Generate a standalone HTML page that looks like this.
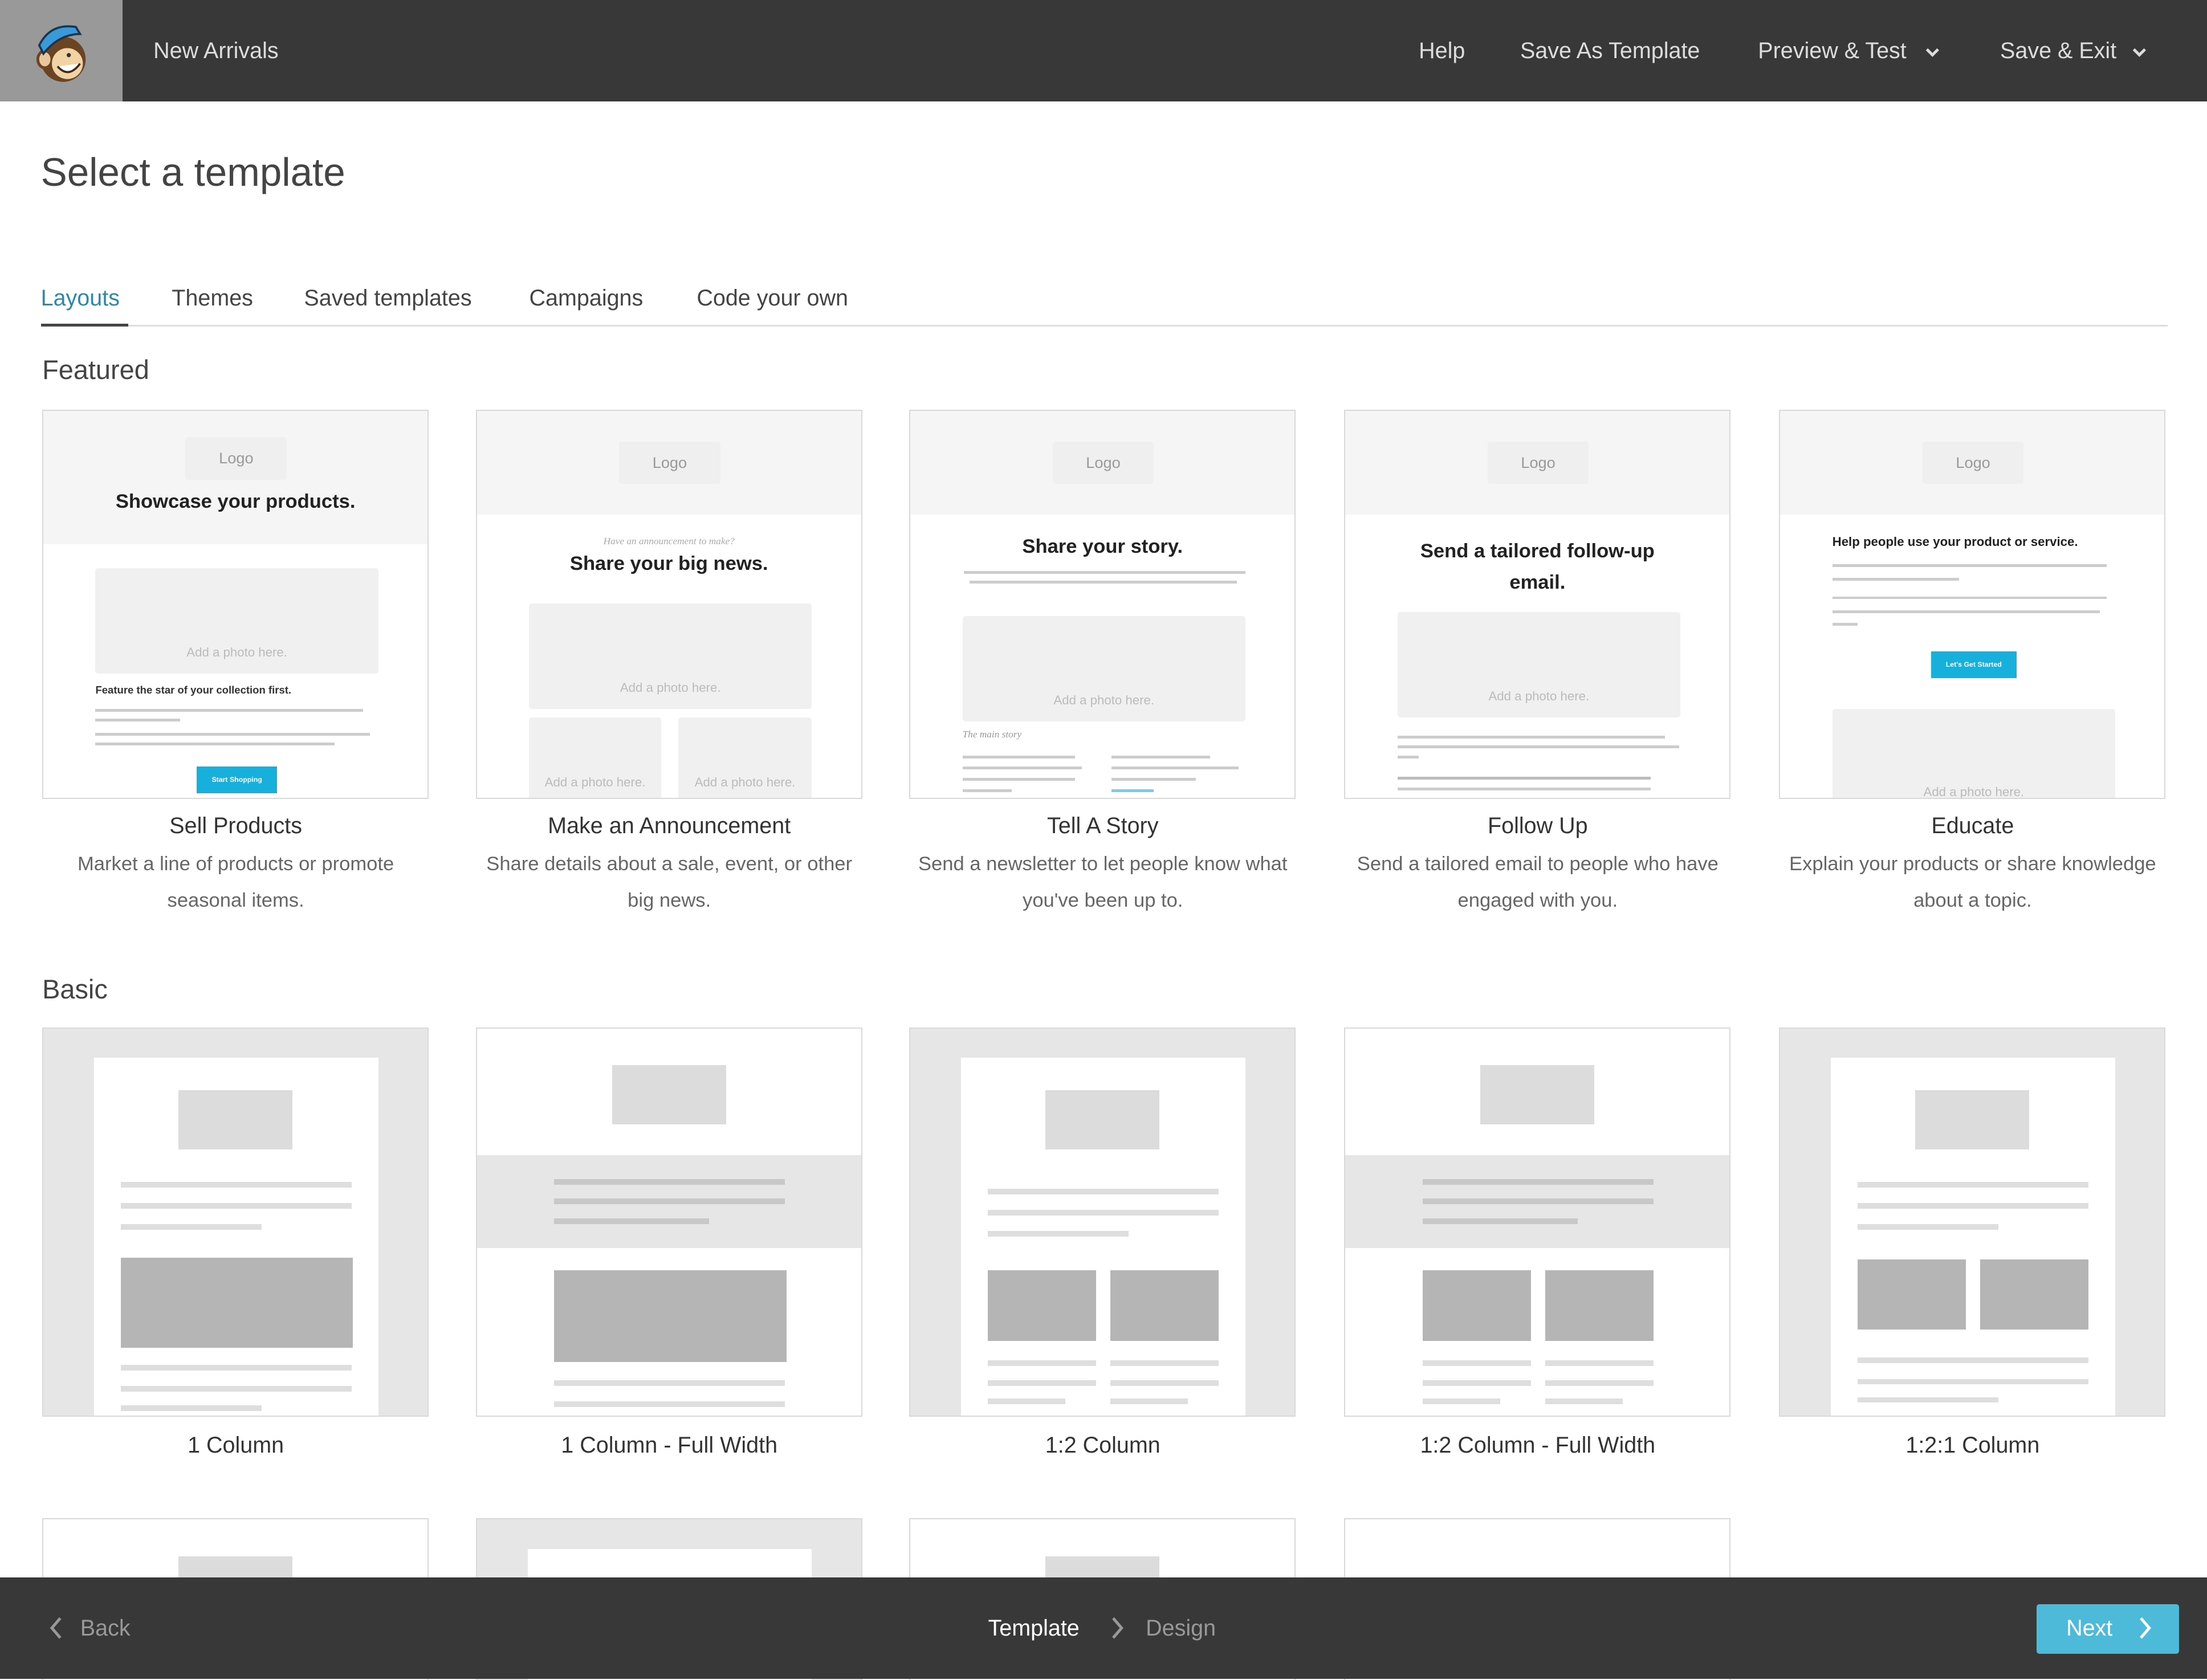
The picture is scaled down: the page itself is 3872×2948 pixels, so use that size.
<!DOCTYPE html>
<html style="width:3872px;height:2948px;overflow:hidden"><head><meta charset="utf-8">
<style>
html,body{margin:0;padding:0;background:#fff;overflow:hidden}
body{width:1568px;height:1193px;zoom:2.46939;position:relative;font-family:"Liberation Sans",sans-serif;color:#444}
.a{position:absolute}
.hdr{left:0;top:0;width:1568px;height:72px;background:#383838}
.nav{color:#ddd;font-size:16px;top:27px}
.card{position:absolute;width:273px;height:275px;border:1px solid #d9d9d9;background:#fff;overflow:hidden}
.band{position:absolute;left:0;top:0;width:100%;background:#f5f5f5}
.logo{position:absolute;width:72px;height:30px;background:#efefef;color:#999;font-size:11px;text-align:center;line-height:30px;border-radius:2px}
.ph{position:absolute;background:#f0f0f0;color:#bbb;font-size:9px;text-align:center;border-radius:2px}
.h{position:absolute;left:0;width:100%;text-align:center;font-weight:bold;color:#222}
.tl{position:absolute;height:2px;background:#ccc}
.btn{position:absolute;background:#17b0dd;color:#fff;font-size:5px;font-weight:bold;text-align:center}
.ct{position:absolute;width:275px;text-align:center;font-size:16px;color:#333}
.cd{position:absolute;width:275px;text-align:center;font-size:14px;color:#666;line-height:26px}
.g{position:absolute;background:#e6e6e6}
.w{position:absolute;background:#fff}
.lg{position:absolute;background:#dcdcdc}
.ln{position:absolute;height:4px;background:#dedede}
.ln2{position:absolute;height:4px;background:#c8c8c8}
.bk{position:absolute;background:#b5b5b5}
.tab{position:absolute;top:203px;font-size:16px;color:#444}
.sec{position:absolute;left:30px;font-size:19px;color:#444}
</style></head><body>

<div class="a hdr"></div>
<div class="a" style="left:0;top:0;width:87px;height:72px;background:#999"></div>
<svg class="a" style="left:22px;top:14px" width="44" height="46" viewBox="0 0 44 46">
<ellipse cx="23" cy="28" rx="16" ry="16" fill="#6b4423"/>
<ellipse cx="10" cy="28" rx="5" ry="6" fill="#e9c79a" stroke="#6b4423" stroke-width="2"/>
<ellipse cx="26" cy="31" rx="11" ry="11" fill="#f2d3a6"/>
<path d="M19 33 Q27 42 35 31" fill="#fff" stroke="#3a2a1a" stroke-width="1.5"/>
<path d="M6 18 Q14 2 32 5 L35 10 Q20 10 9 24 Z" fill="#3a9ad9" stroke="#1a3550" stroke-width="1.5"/>
<circle cx="27" cy="25" r="1.5" fill="#333"/>
</svg>
<div class="a nav" style="left:109px;top:27px">New Arrivals</div>
<div class="a nav" style="left:1008px">Help</div>
<div class="a nav" style="left:1080px">Save As Template</div>
<div class="a nav" style="left:1249px">Preview &amp; Test</div>
<svg class="a" style="left:1368px;top:34px" width="10" height="7"><path d="M1 1 L5 5 L9 1" stroke="#ddd" stroke-width="2" fill="none"/></svg>
<div class="a nav" style="left:1421px">Save &amp; Exit</div>
<svg class="a" style="left:1515px;top:34px" width="10" height="7"><path d="M1 1 L5 5 L9 1" stroke="#ddd" stroke-width="2" fill="none"/></svg>

<div class="a" style="left:29px;top:106px;font-size:28px;color:#444">Select a template</div>

<div class="tab" style="left:29px;color:#2a8aa8">Layouts</div>
<div class="tab" style="left:122px">Themes</div>
<div class="tab" style="left:216px">Saved templates</div>
<div class="tab" style="left:376px">Campaigns</div>
<div class="tab" style="left:495px">Code your own</div>
<div class="a" style="left:29px;top:231px;width:1511px;height:1px;background:#ddd"></div>
<div class="a" style="left:29px;top:230px;width:62px;height:2px;background:#444"></div>

<div class="sec" style="top:252px">Featured</div>

<div class="card" style="left:30px;top:291px">
 <div class="band" style="height:95px"></div>
 <div class="logo" style="left:101px;top:19px">Logo</div>
 <div class="h" style="top:57px;font-size:14px">Showcase your products.</div>
 <div class="ph" style="left:37px;top:112px;width:201px;height:75px;line-height:120px">Add a photo here.</div>
 <div class="a" style="left:37px;top:194px;font-size:7.5px;font-weight:bold;color:#333">Feature the star of your collection first.</div>
 <div class="tl" style="left:37px;top:212px;width:190px"></div>
 <div class="tl" style="left:37px;top:219px;width:60px"></div>
 <div class="tl" style="left:37px;top:229px;width:195px"></div>
 <div class="tl" style="left:37px;top:236px;width:170px"></div>
 <div class="btn" style="left:109px;top:253px;width:57px;height:19px;line-height:19px">Start Shopping</div>
</div>
<div class="ct" style="left:30px;top:578px">Sell Products</div>
<div class="cd" style="left:30px;top:601px">Market a line of products or promote seasonal items.</div>

<div class="card" style="left:338px;top:291px">
 <div class="band" style="height:74px"></div>
 <div class="logo" style="left:101px;top:22px">Logo</div>
 <div class="a" style="left:0;width:100%;top:89px;text-align:center;font-size:7px;font-style:italic;color:#aaa;font-family:'Liberation Serif',serif">Have an announcement to make?</div>
 <div class="h" style="top:101px;font-size:14px">Share your big news.</div>
 <div class="ph" style="left:37px;top:137px;width:201px;height:75px;line-height:120px">Add a photo here.</div>
 <div class="ph" style="left:37px;top:218px;width:94px;height:70px;line-height:92px">Add a photo here.</div>
 <div class="ph" style="left:143px;top:218px;width:95px;height:70px;line-height:92px">Add a photo here.</div>
</div>
<div class="ct" style="left:338px;top:578px">Make an Announcement</div>
<div class="cd" style="left:338px;top:601px">Share details about a sale, event, or other big news.</div>

<div class="card" style="left:646px;top:291px">
 <div class="band" style="height:74px"></div>
 <div class="logo" style="left:101px;top:22px">Logo</div>
 <div class="h" style="top:89px;font-size:14px">Share your story.</div>
 <div class="tl" style="left:38px;top:114px;width:200px"></div>
 <div class="tl" style="left:42px;top:121px;width:190px"></div>
 <div class="ph" style="left:37px;top:146px;width:201px;height:75px;line-height:120px">Add a photo here.</div>
 <div class="a" style="left:37px;top:226px;font-size:7px;font-style:italic;color:#999;font-family:'Liberation Serif',serif">The main story</div>
 <div class="tl" style="left:37px;top:245px;width:80px"></div>
 <div class="tl" style="left:37px;top:253px;width:85px"></div>
 <div class="tl" style="left:37px;top:261px;width:80px"></div>
 <div class="tl" style="left:37px;top:269px;width:35px"></div>
 <div class="tl" style="left:143px;top:245px;width:70px"></div>
 <div class="tl" style="left:143px;top:253px;width:90px"></div>
 <div class="tl" style="left:143px;top:261px;width:60px"></div>
 <div class="tl" style="left:143px;top:269px;width:30px;background:#7cc9e8"></div>
</div>
<div class="ct" style="left:646px;top:578px">Tell A Story</div>
<div class="cd" style="left:646px;top:601px">Send a newsletter to let people know what you've been up to.</div>

<div class="card" style="left:955px;top:291px">
 <div class="band" style="height:74px"></div>
 <div class="logo" style="left:101px;top:22px">Logo</div>
 <div class="h" style="top:89px;font-size:14px;line-height:22px">Send a tailored follow-up<br>email.</div>
 <div class="ph" style="left:37px;top:143px;width:201px;height:75px;line-height:120px">Add a photo here.</div>
 <div class="tl" style="left:37px;top:231px;width:190px"></div>
 <div class="tl" style="left:37px;top:238px;width:200px"></div>
 <div class="tl" style="left:37px;top:245px;width:15px"></div>
 <div class="tl" style="left:37px;top:260px;width:180px;background:#bbb"></div>
 <div class="tl" style="left:37px;top:268px;width:180px"></div>
</div>
<div class="ct" style="left:955px;top:578px">Follow Up</div>
<div class="cd" style="left:955px;top:601px">Send a tailored email to people who have engaged with you.</div>

<div class="card" style="left:1264px;top:291px">
 <div class="band" style="height:74px"></div>
 <div class="logo" style="left:101px;top:22px">Logo</div>
 <div class="a" style="left:37px;top:88px;font-size:9px;font-weight:bold;color:#222">Help people use your product or service.</div>
 <div class="tl" style="left:37px;top:109px;width:195px"></div>
 <div class="tl" style="left:37px;top:119px;width:90px"></div>
 <div class="tl" style="left:37px;top:132px;width:195px"></div>
 <div class="tl" style="left:37px;top:142px;width:190px"></div>
 <div class="tl" style="left:37px;top:151px;width:18px"></div>
 <div class="btn" style="left:107px;top:171px;width:61px;height:19px;line-height:19px">Let's Get Started</div>
 <div class="ph" style="left:37px;top:212px;width:201px;height:70px;line-height:118px">Add a photo here.</div>
</div>
<div class="ct" style="left:1264px;top:578px">Educate</div>
<div class="cd" style="left:1264px;top:601px">Explain your products or share knowledge about a topic.</div>

<div class="sec" style="top:692px">Basic</div>

<div class="card" style="left:30px;top:730px;background:#e6e6e6">
 <div class="w" style="left:36px;top:21px;width:202px;height:260px"></div>
 <div class="lg" style="left:96px;top:44px;width:81px;height:42px"></div>
 <div class="ln" style="left:55px;top:109px;width:164px"></div>
 <div class="ln" style="left:55px;top:124px;width:164px"></div>
 <div class="ln" style="left:55px;top:139px;width:100px"></div>
 <div class="bk" style="left:55px;top:163px;width:165px;height:64px"></div>
 <div class="ln" style="left:55px;top:239px;width:164px"></div>
 <div class="ln" style="left:55px;top:254px;width:164px"></div>
 <div class="ln" style="left:55px;top:268px;width:100px"></div>
</div>
<div class="ct" style="left:30px;top:1018px">1 Column</div>

<div class="card" style="left:338px;top:730px">
 <div class="lg" style="left:96px;top:26px;width:81px;height:42px"></div>
 <div class="g" style="left:0;top:90px;width:275px;height:66px"></div>
 <div class="ln2" style="left:55px;top:107px;width:164px"></div>
 <div class="ln2" style="left:55px;top:121px;width:164px"></div>
 <div class="ln2" style="left:55px;top:135px;width:110px"></div>
 <div class="bk" style="left:55px;top:172px;width:165px;height:65px"></div>
 <div class="ln" style="left:55px;top:250px;width:164px"></div>
 <div class="ln" style="left:55px;top:265px;width:164px"></div>
</div>
<div class="ct" style="left:338px;top:1018px">1 Column - Full Width</div>

<div class="card" style="left:646px;top:730px;background:#e6e6e6">
 <div class="w" style="left:36px;top:21px;width:202px;height:260px"></div>
 <div class="lg" style="left:96px;top:44px;width:81px;height:42px"></div>
 <div class="ln" style="left:55px;top:114px;width:164px"></div>
 <div class="ln" style="left:55px;top:129px;width:164px"></div>
 <div class="ln" style="left:55px;top:144px;width:100px"></div>
 <div class="bk" style="left:55px;top:172px;width:77px;height:50px"></div>
 <div class="bk" style="left:142px;top:172px;width:77px;height:50px"></div>
 <div class="ln" style="left:55px;top:236px;width:77px"></div>
 <div class="ln" style="left:55px;top:250px;width:77px"></div>
 <div class="ln" style="left:55px;top:263px;width:55px"></div>
 <div class="ln" style="left:142px;top:236px;width:77px"></div>
 <div class="ln" style="left:142px;top:250px;width:77px"></div>
 <div class="ln" style="left:142px;top:263px;width:55px"></div>
</div>
<div class="ct" style="left:646px;top:1018px">1:2 Column</div>

<div class="card" style="left:955px;top:730px">
 <div class="lg" style="left:96px;top:26px;width:81px;height:42px"></div>
 <div class="g" style="left:0;top:90px;width:275px;height:66px"></div>
 <div class="ln2" style="left:55px;top:107px;width:164px"></div>
 <div class="ln2" style="left:55px;top:121px;width:164px"></div>
 <div class="ln2" style="left:55px;top:135px;width:110px"></div>
 <div class="bk" style="left:55px;top:172px;width:77px;height:50px"></div>
 <div class="bk" style="left:142px;top:172px;width:77px;height:50px"></div>
 <div class="ln" style="left:55px;top:236px;width:77px"></div>
 <div class="ln" style="left:55px;top:250px;width:77px"></div>
 <div class="ln" style="left:55px;top:263px;width:55px"></div>
 <div class="ln" style="left:142px;top:236px;width:77px"></div>
 <div class="ln" style="left:142px;top:250px;width:77px"></div>
 <div class="ln" style="left:142px;top:263px;width:55px"></div>
</div>
<div class="ct" style="left:955px;top:1018px">1:2 Column - Full Width</div>

<div class="card" style="left:1264px;top:730px;background:#e6e6e6">
 <div class="w" style="left:36px;top:21px;width:202px;height:260px"></div>
 <div class="lg" style="left:96px;top:44px;width:81px;height:42px"></div>
 <div class="ln" style="left:55px;top:109px;width:164px"></div>
 <div class="ln" style="left:55px;top:124px;width:164px"></div>
 <div class="ln" style="left:55px;top:139px;width:100px"></div>
 <div class="bk" style="left:55px;top:164px;width:77px;height:50px"></div>
 <div class="bk" style="left:142px;top:164px;width:77px;height:50px"></div>
 <div class="ln" style="left:55px;top:234px;width:164px"></div>
 <div class="ln" style="left:55px;top:249px;width:164px"></div>
 <div class="ln" style="left:55px;top:262px;width:100px"></div>
</div>
<div class="ct" style="left:1264px;top:1018px">1:2:1 Column</div>

<div class="card" style="left:30px;top:1079px">
 <div class="lg" style="left:96px;top:26px;width:81px;height:42px"></div>
</div>
<div class="card" style="left:338px;top:1079px;background:#e6e6e6">
 <div class="w" style="left:36px;top:21px;width:202px;height:260px"></div>
</div>
<div class="card" style="left:646px;top:1079px">
 <div class="lg" style="left:96px;top:26px;width:81px;height:42px"></div>
</div>
<div class="card" style="left:955px;top:1079px"></div>

<div class="a" style="left:0;top:1121px;width:1568px;height:72px;background:#383838"></div>
<svg class="a" style="left:35px;top:1149px" width="10" height="16"><path d="M8 1 L2 8 L8 15" stroke="#999" stroke-width="2" fill="none"/></svg>
<div class="a" style="left:57px;top:1148px;font-size:16px;color:#999">Back</div>
<div class="a" style="left:702px;top:1148px;font-size:16px;color:#fff">Template</div>
<svg class="a" style="left:789px;top:1149px" width="10" height="16"><path d="M2 1 L8 8 L2 15" stroke="#999" stroke-width="2" fill="none"/></svg>
<div class="a" style="left:814px;top:1148px;font-size:16px;color:#999">Design</div>
<div class="a" style="left:1447px;top:1140px;width:101px;height:35px;background:#4dbad9;border-radius:2px"></div>
<div class="a" style="left:1468px;top:1148px;font-size:16px;color:#fff">Next</div>
<svg class="a" style="left:1519px;top:1149px" width="10" height="16"><path d="M2 1 L8 8 L2 15" stroke="#fff" stroke-width="2" fill="none"/></svg>

</body></html>
